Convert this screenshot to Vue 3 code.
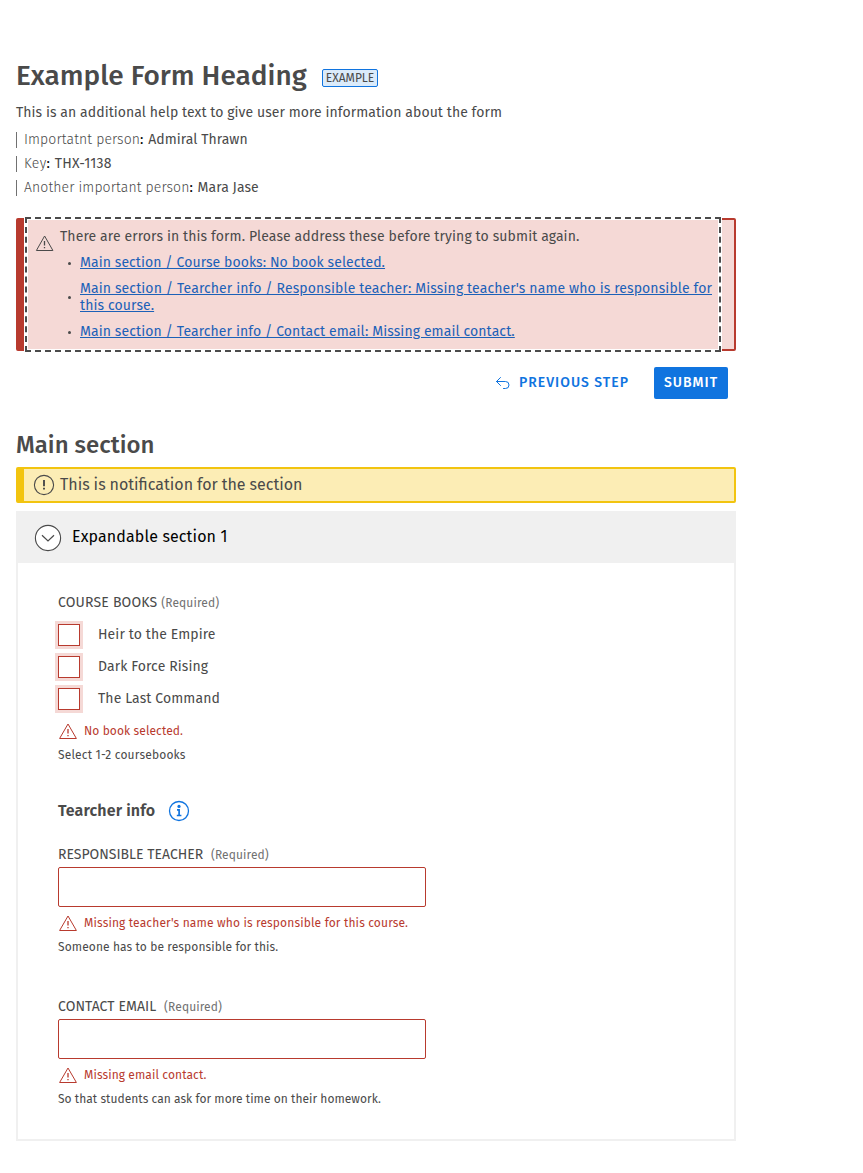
<script setup>
const meta = [
  { label: 'Importatnt person', value: 'Admiral Thrawn' },
  { label: 'Key', value: 'THX-1138' },
  { label: 'Another important person', value: 'Mara Jase' },
]
const errors = [
  'Main section / Course books: No book selected.',
  "Main section / Tearcher info / Responsible teacher: Missing teacher's name who is responsible for this course.",
  'Main section / Tearcher info / Contact email: Missing email contact.',
]
const books = ['Heir to the Empire', 'Dark Force Rising', 'The Last Command']
const fields = [
  {
    id: 'teacher',
    label: 'Responsible teacher',
    error: "Missing teacher's name who is responsible for this course.",
    help: 'Someone has to be responsible for this.',
  },
  {
    id: 'email',
    label: 'Contact email',
    error: 'Missing email contact.',
    help: 'So that students can ask for more time on their homework.',
  },
]
</script>

<template>
  <main class="page">
    <header class="head">
      <h1>Example Form Heading</h1>
      <span class="tag">EXAMPLE</span>
    </header>
    <p class="lead">This is an additional help text to give user more information about the form</p>
    <ul class="meta">
      <li v-for="m in meta" :key="m.label"><span class="meta-label">{{ m.label }}</span><span class="colon">: </span>{{ m.value }}</li>
    </ul>

    <section class="alert">
      <div class="alert-focus">
        <svg class="alert-icon" width="20" height="20" viewBox="0 0 20 20" fill="none" stroke="currentColor">
          <path d="M9.6 3 L17.9 17.5 H1.4 Z" stroke-linejoin="round" />
          <path d="M9.5 8v4.6M9.5 13.9v1.4" stroke-width="1.3" />
        </svg>
        <div class="alert-body">
          <p>There are errors in this form. Please address these before trying to submit again.</p>
          <ul>
            <li v-for="e in errors" :key="e"><a href="#">{{ e }}</a></li>
          </ul>
        </div>
      </div>
    </section>

    <div class="actions">
      <button class="btn link" type="button">
        <svg width="16" height="16" viewBox="0 0 16 16" fill="none" stroke="#1074df" stroke-linecap="round" stroke-linejoin="round">
          <path d="M5.5 2.5 L1.5 6.5 L5.5 10.5 M1.5 6.5 H10.5 Q14 6.5 14 10 Q14 13.5 10.5 13.5 H8.5" />
        </svg>
        <span>PREVIOUS STEP</span>
      </button>
      <button class="btn solid" type="button">SUBMIT</button>
    </div>

    <h2>Main section</h2>
    <div class="notice">
      <svg width="22" height="22" viewBox="0 0 22 22" fill="none" stroke="currentColor">
        <circle cx="11" cy="11" r="9.6" stroke-width="1.1" />
        <path d="M11 6v6.3M11 13.8v1.8" stroke-width="1.9" />
      </svg>
      <span>This is notification for the section</span>
    </div>

    <section class="expand">
      <div class="expand-head">
        <svg width="28" height="28" viewBox="0 0 28 28" stroke="#4a4a4a" fill="none">
          <circle cx="14" cy="14" r="12.6" fill="#fff" stroke-width="1.1" />
          <path d="M8 11.2 L14 17 L20 11.2" stroke-width="1.2" />
        </svg>
        <span>Expandable section 1</span>
      </div>
      <div class="expand-body">
        <div class="label books-label">COURSE BOOKS <span class="req">(Required)</span></div>
        <div class="books">
          <label v-for="b in books" :key="b" class="book"><i class="box"></i><span>{{ b }}</span></label>
        </div>
        <div class="error">
          <svg width="20" height="20" viewBox="0 0 20 20" fill="none" stroke="currentColor">
            <path d="M10 3 L18.4 17.5 H1.6 Z" stroke-linejoin="round" />
            <path d="M10 8v4.6M10 13.9v1.4" stroke-width="1.3" />
          </svg>
          <span>No book selected.</span>
        </div>
        <div class="help books-help">Select 1-2 coursebooks</div>

        <h3>
          <span>Tearcher info</span>
          <svg width="22" height="22" viewBox="0 0 22 22" fill="none" stroke="#1074df">
            <circle cx="11" cy="11" r="9.5" stroke-width="1.3" />
            <circle cx="11" cy="6.4" r="1.6" fill="#1074df" stroke="none" />
            <path d="M9 9.8h2.1v5.4M8.8 15.5h4.6" stroke-width="1.7" />
          </svg>
        </h3>

        <div v-for="f in fields" :key="f.id" class="field" :class="f.id">
          <label class="label upper" :for="f.id">{{ f.label }} <span class="req gap">(Required)</span></label>
          <input :id="f.id" type="text">
          <div class="error">
            <svg width="20" height="20" viewBox="0 0 20 20" fill="none" stroke="currentColor">
              <path d="M10 3 L18.4 17.5 H1.6 Z" stroke-linejoin="round" />
              <path d="M10 8v4.6M10 13.9v1.4" stroke-width="1.3" />
            </svg>
            <span>{{ f.error }}</span>
          </div>
          <div class="help">{{ f.help }}</div>
        </div>
      </div>
    </section>
  </main>
</template>

<style>
body { background: #fff; }
</style>

<style scoped>
.page {
  box-sizing: border-box;
  width: 752px;
  padding: 56px 16px 0;
  color: #4a4a4a;
  font: 400 14px/24px "Fira Sans", "Noto Sans", sans-serif;
}
h1, h2, h3, p, ul { margin: 0; padding: 0; }
ul { list-style: none; }
svg { display: block; flex: none; }

.head { display: flex; align-items: center; height: 40px; }
h1 { font-size: 28px; line-height: 40px; font-weight: 500; }
.tag {
  box-sizing: border-box;
  height: 18px;
  margin: 4px 0 0 15px;
  padding: 0 3px;
  border: 1px solid #1074df;
  border-radius: 2px;
  background: #dbebfa;
  font-size: 12px;
  line-height: 16px;
}
.lead { margin-top: 5px; letter-spacing: 0.066px; }
.meta { margin-top: 7px; letter-spacing: 0.06px; }
.meta li {
  height: 16px;
  margin-bottom: 8px;
  padding-left: 7px;
  border-left: 1px solid #717171;
  line-height: 15px;
}
.meta li:nth-child(2) { letter-spacing: 0.25px; }
.meta-label { font-weight: 300; letter-spacing: 0.1px; }
.meta li:nth-child(2) .meta-label { letter-spacing: 0.35px; }
.colon { color: #000; letter-spacing: 0.5px; }

.alert {
  margin-top: 22px;
  padding-right: 16px;
  border: 2px solid #b83a2e;
  border-left-width: 8px;
  border-radius: 2px;
  background: #f5d9d6;
}
.alert-focus {
  display: flex;
  box-sizing: border-box;
  height: 129px;
  margin-left: 4px;
  padding-left: 7px;
  outline: 2px dashed #4a4a4a;
  outline-offset: 1px;
  box-shadow: 0 0 0 4px #fff;
}
.alert-icon { margin-top: 13px; }
.alert-body { margin-left: 5px; padding-top: 8px; line-height: 17px; letter-spacing: 0.112px; }
.alert-body ul { margin-top: 9px; }
.alert-body li { display: flex; align-items: center; margin-bottom: 9px; padding-left: 8px; }
.alert-body li:nth-child(1) { letter-spacing: 0.08px; }
.alert-body li:nth-child(3) { letter-spacing: 0.1px; }
.alert-body li::before {
  content: "";
  flex: none;
  width: 3px;
  height: 3px;
  margin: 1px 9px 0 0;
  border-radius: 50%;
  background: #4a4a4a;
}
.alert-body a { color: #1c61b8; }

.actions { display: flex; justify-content: flex-end; gap: 16px; margin-top: 16px; padding-right: 8px; }
.btn {
  display: flex;
  align-items: center;
  gap: 8px;
  height: 32px;
  padding: 0 9px 0 10px;
  border: 0;
  border-radius: 2px;
  font: 500 14px/24px "Fira Sans", "Noto Sans", sans-serif;
  letter-spacing: 1px;
}
.link { background: none; color: #1074df; }
.solid { width: 74px; background: #1074df; color: #fff; }

h2 { margin-top: 30px; font-size: 24px; line-height: 32px; font-weight: 500; }
.notice {
  display: flex;
  align-items: center;
  box-sizing: border-box;
  height: 36px;
  margin-top: 6px;
  padding-left: 9px;
  gap: 5px;
  border: 2px solid #f2c40f;
  border-left-width: 8px;
  border-radius: 2px;
  background: #fcedb5;
  font-size: 16px;
  word-spacing: -0.25px;
}
.expand { margin-top: 8px; border: 2px solid #f0f0f0; border-top: 0; }
.expand-head {
  display: flex;
  align-items: center;
  box-sizing: border-box;
  height: 52px;
  padding: 1px 0 0 16px;
  gap: 10px;
  background: #f0f0f0;
  color: #000;
  font-size: 16px;
  letter-spacing: 0.12px;
}
.expand-head span { margin-top: -1px; }
.expand-body { box-sizing: border-box; height: 576px; padding: 28px 40px 0; }
.label { display: block; height: 24px; }
.upper { text-transform: uppercase; }
.books-label { letter-spacing: 0.17px; }
.email .label { letter-spacing: 0.07px; }
.req { color: #717171; font-size: 12px; text-transform: none; letter-spacing: 0.1px; }
.gap { margin-left: 4px; }
.book { display: flex; align-items: center; height: 32px; letter-spacing: 0.1px; }
.books { margin-top: 4px; }
.box {
  box-sizing: border-box;
  width: 22px;
  height: 22px;
  margin-right: 18px;
  border: 1px solid #b83a2e;
  box-shadow: 0 0 0 3px #f5d9d6;
}
.error {
  display: flex;
  align-items: center;
  gap: 6px;
  height: 24px;
  color: #b83a2e;
  font-size: 12px;
  letter-spacing: 0.09px;
}
.books + .error { margin-top: 4px; }
.teacher .error { letter-spacing: 0.147px; }
.help { height: 24px; font-size: 12px; letter-spacing: 0.1px; }
.books-help { letter-spacing: 0.18px; }
.email .help { letter-spacing: 0.035px; }
h3 {
  display: flex;
  align-items: center;
  gap: 13px;
  margin-top: 32px;
  height: 24px;
  font-size: 16px;
  font-weight: 600;
  letter-spacing: 0.14px;
}
.field { margin-top: 20px; }
.field + .field { margin-top: 36px; }
input {
  display: block;
  box-sizing: border-box;
  width: 368px;
  height: 40px;
  margin: 0 0 4px;
  border: 1px solid #b83a2e;
  border-radius: 2px;
  background: #fff;
}
</style>
